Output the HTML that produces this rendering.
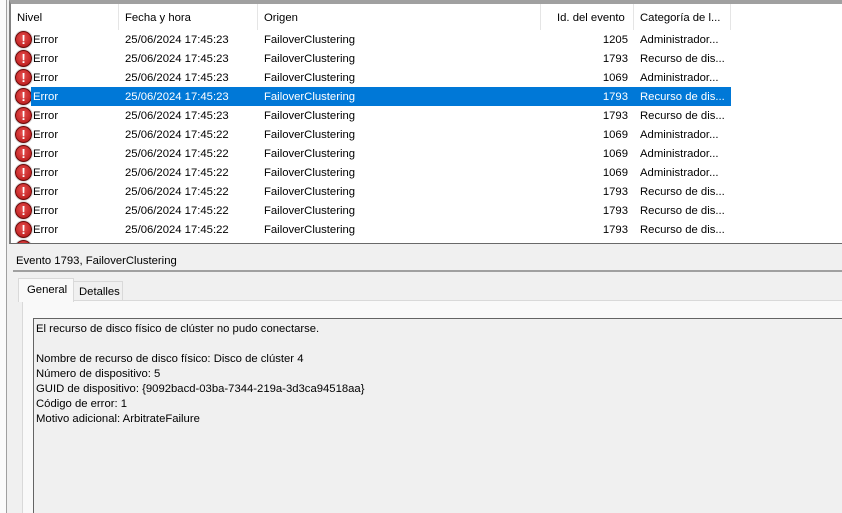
<!DOCTYPE html>
<html><head><meta charset="utf-8"><style>
*{margin:0;padding:0;box-sizing:border-box}
body{width:842px;height:513px;overflow:hidden;background:#f0f0f0;font-family:"Liberation Sans",sans-serif;font-size:11.3px;color:#000;position:relative}
.abs{position:absolute}
.list{left:9px;top:0;width:833px;height:244px;background:#fff;border-top:4px solid #a0a0a0;border-left:2px solid #828282;border-bottom:1px solid #696969;overflow:hidden}
.hdr{position:absolute;top:1px;height:26px;line-height:26px;white-space:nowrap}
.sep{position:absolute;top:0;width:1px;height:26px;background:#e5e5e5}
.row{position:absolute;left:0;width:720px;height:19px;line-height:19px;white-space:nowrap}
.row span{position:absolute}
.sel{background:#0078d7;color:#fff}
.ico{position:absolute;left:4px;top:1px;width:17px;height:17px;border-radius:50%;background:radial-gradient(circle at 45% 40%,#e85050,#b01010);border:1px solid #6a0a0a;box-shadow:0 0 0 1px #ddd}
.ico:after{content:"!";position:absolute;left:0;top:0;width:15px;text-align:center;color:#fff;font-weight:bold;font-size:13px;line-height:16px}
</style></head><body>
<div class="abs" style="left:0;top:0;width:7px;height:513px;background:#fbfbfb;border-right:1px solid #a0a0a0"></div>
<div class="abs list">
 <div class="hdr" style="left:6px">Nivel</div><div class="sep" style="left:107px"></div>
 <div class="hdr" style="left:114px">Fecha y hora</div><div class="sep" style="left:246px"></div>
 <div class="hdr" style="left:253px">Origen</div><div class="sep" style="left:529px"></div>
 <div class="hdr" style="left:546px">Id. del evento</div><div class="sep" style="left:622px"></div>
 <div class="hdr" style="left:629px">Categoría de l...</div><div class="sep" style="left:719px"></div>
 <div id="rows"></div>
</div>
<div class="abs" style="left:16px;top:255px">Evento 1793, FailoverClustering</div>
<div class="abs" style="left:13px;top:270px;width:829px;height:2px;background:#a0a0a0"></div>
<div class="abs" style="left:22px;top:300px;width:820px;height:213px;background:#f9f9f9;border:1px solid #d9d9d9;border-right:none;border-bottom:none"></div>
<div class="abs" style="left:73px;top:281px;width:50px;height:20px;background:#f0f0f0;border:1px solid #d9d9d9;line-height:21px;padding-left:5px">Detalles</div>
<div class="abs" style="left:18px;top:278px;width:56px;height:24px;background:#f9f9f9;border:1px solid #d9d9d9;border-bottom:none;line-height:23px;padding-left:8px">General</div>
<div class="abs" style="left:33px;top:318px;width:809px;height:195px;background:#f0f0f0;border-left:1px solid #646464;border-top:1px solid #646464;padding:3px 0 0 2px;line-height:15px">
El recurso de disco físico de clúster no pudo conectarse.<br><br>Nombre de recurso de disco físico: Disco de clúster 4<br>Número de dispositivo: 5<br>GUID de dispositivo: {9092bacd-03ba-7344-219a-3d3ca94518aa}<br>Código de error: 1<br>Motivo adicional: ArbitrateFailure</div>
<script>
var d=[["23","1205","Administrador..."],["23","1793","Recurso de dis..."],["23","1069","Administrador..."],["23","1793","Recurso de dis..."],["23","1793","Recurso de dis..."],["22","1069","Administrador..."],["22","1069","Administrador..."],["22","1069","Administrador..."],["22","1793","Recurso de dis..."],["22","1793","Recurso de dis..."],["22","1793","Recurso de dis..."],["22","1793","Recurso de dis..."]];
var h="";d.forEach(function(r,i){var c=i==3?';color:#fff':'';h+='<div class="row" style="top:'+(26+i*19)+'px"><div class="ico"></div><div class="'+(i==3?'sel':'')+'" style="position:absolute;left:20px;top:0;width:700px;height:19px"></div><span style="left:22px;top:1px'+c+'">Error</span><span style="left:114px;top:1px'+c+'">25/06/2024 17:45:'+r[0]+'</span><span style="left:253px;top:1px'+c+'">FailoverClustering</span><span style="left:585px;top:1px;width:32px;text-align:right'+c+'">'+r[1]+'</span><span style="left:629px;top:1px'+c+'">'+r[2]+'</span></div>'});
document.getElementById("rows").innerHTML=h;
</script>
</body></html>
